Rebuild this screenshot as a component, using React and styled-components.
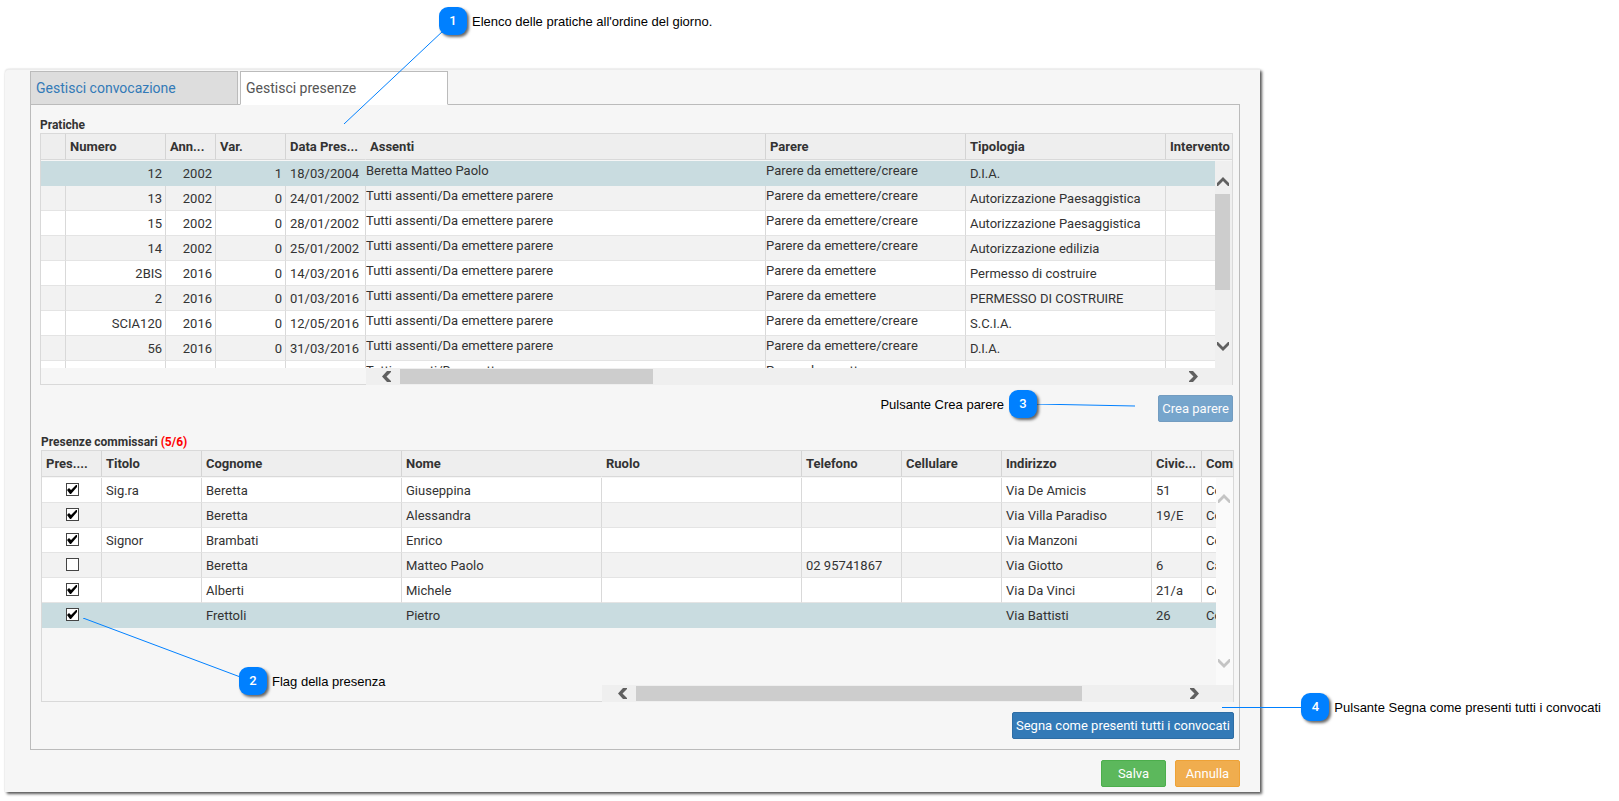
import React, { useState } from "react";
import styled, { createGlobalStyle, css } from "styled-components";

const GlobalStyle = createGlobalStyle`
  *, *::before, *::after { box-sizing: border-box; }
  body {
    margin: 0;
    background: #fff;
    color: #333;
    font-family: Roboto, "Liberation Sans", sans-serif;
    font-size: 13px;
  }
`;

const Page = styled.div`
  position: relative;
  padding: 69px 359px 9px 5px;
`;

const Window = styled.main`
  padding: 1px 20px 5px 25px;
  border-top: 1px solid #ececec;
  border-radius: 4px 0 0 0;
  background: #f6f6f6;
  box-shadow: 2px 2px 3px rgba(0, 0, 0, 0.65), 0 0 2px rgba(0, 0, 0, 0.15);
`;

const TabBar = styled.div`
  display: flex;
  gap: 2px;
  margin-bottom: -1px;
`;

const Tab = styled.button`
  position: relative;
  width: 208px;
  height: 34px;
  padding: 0 5px;
  border: 1px solid #bbb;
  background: #ddd;
  color: #337ab7;
  font: 14px/32px Roboto, sans-serif;
  text-align: left;
  cursor: pointer;

  ${(p) =>
    p.$active &&
    css`
      border-bottom-color: #fff;
      background: #fff;
      color: #555;
    `}
`;

const TabBody = styled.div`
  display: flex;
  flex-direction: column;
  gap: 12px;
  padding: 12px 0 10px;
  border: 1px solid #bbb;
`;

const Section = styled.section`
  display: flex;
  flex-direction: column;
  padding: 0 6px 0 9px;
`;

const MembersSection = styled(Section)`
  padding: 0 5px 0 10px;
`;

const SectionTitle = styled.h2`
  margin: 0;
  font-size: 12px;
  line-height: 16px;
  font-weight: 700;
`;

const Count = styled.span`
  color: #f00;
`;

const GridBox = styled.div`
  display: grid;
  grid-template-columns: minmax(0, 1fr) 17px;
  grid-template-rows: 27px 207px 17px;
  border: 1px solid #d9d9d9;
  border-bottom: 0;
`;

const TableArea = styled.div`
  grid-column: 1 / 3;
  grid-row: 1 / 3;
  overflow: hidden;
`;

const Table = styled.table`
  width: 100%;
  table-layout: fixed;
  border-collapse: separate;
  border-spacing: 0;

  tbody::before {
    content: "";
    display: block;
    height: 1px;
  }
`;

const HeadCell = styled.th`
  height: 26px;
  padding: 0 3px 0 4px;
  border-right: 1px solid ${(p) => (p.$open ? "#eee" : "#d4d4d4")};
  border-bottom: 1px solid #d9d9d9;
  background: #eee;
  line-height: 25px;
  text-align: left;
  white-space: nowrap;
  overflow: hidden;

  &:last-child {
    padding-right: 0;
    border-right: 0;
  }
`;

const Row = styled.tr`
  background: ${(p) => (p.$odd ? "#f2f2f2" : "#fff")};

  ${(p) =>
    p.$selected &&
    css`
      background: #c9dce0;

      && > td {
        border-color: transparent;
      }
    `}
`;

const Cell = styled.td`
  height: 25px;
  padding: 2px 3px 0 4px;
  border-right: 1px solid #d9d9d9;
  border-bottom: 1px solid #e4e4e4;
  line-height: 22px;
  text-align: ${(p) => p.$align || "left"};
  white-space: nowrap;
  overflow: hidden;

  &:last-child {
    padding-right: 0;
    border-right: 0;
  }

  ${(p) =>
    p.$flush &&
    css`
      padding: 0;
      line-height: 20px;
      vertical-align: top;
    `}
`;

const CheckCell = styled(Cell)`
  padding: 5px 3px 0 5px;
  line-height: 13px;
  text-align: center;
  vertical-align: top;
`;

const CheckBox = styled.input`
  appearance: none;
  display: inline-block;
  width: 13px;
  height: 13px;
  margin: 0;
  border: 1px solid #444;
  background: #fff;
  vertical-align: top;

  &:checked::before {
    content: "";
    display: block;
    width: 10px;
    height: 9px;
    margin-top: 1px;
    background: #000;
    clip-path: polygon(0 5px, 2px 3px, 4px 5px, 9px 0, 10px 0, 10px 2px, 4px 9px, 3px 9px);
  }
`;

const VScroll = styled.div`
  grid-column: 2;
  grid-row: 2;
  position: relative;
  display: flex;
  flex-direction: column;
  align-items: center;
  padding: 14px 2px 15px 0;
  background: ${(p) => (p.$idle ? "#fafafa" : "#efefef")};
`;

const HFooter = styled.div`
  grid-column: 1 / 3;
  grid-row: 3;
  display: flex;
`;

const FrozenEdge = styled.div`
  width: ${(p) => p.$width}px;
  border-bottom: 1px solid #d9d9d9;
`;

const HScroll = styled.div`
  flex: 1;
  display: flex;
  align-items: center;
  padding: 0 32px 0 14px;
  background: #efefef;
`;

const Track = styled.div`
  flex: 1;
  align-self: stretch;
  display: flex;
  padding: ${(p) => (p.$vertical ? "6px 0" : "1px 7px")};
`;

const Thumb = styled.div`
  width: ${(p) => (p.$width ? p.$width + "px" : "15px")};
  height: ${(p) => (p.$height ? p.$height + "px" : "15px")};
  background: #cdcdcd;
`;

const VTrack = styled(Track)`
  justify-content: center;
`;

const ArrowButton = styled.button`
  display: flex;
  align-items: center;
  justify-content: center;
  width: 13px;
  height: 13px;
  padding: 0;
  border: 0;
  background: none;
  color: ${(p) => (p.$idle ? "#c4c4c4" : "#606060")};

  svg {
    flex: none;
    fill: currentColor;
  }
`;

const arrows = {
  up: [12, 9, "6,0 12,6 12,9 11,9 6,4 1,9 0,9 0,6"],
  down: [12, 9, "6,9 12,3 12,0 11,0 6,5 1,0 0,0 0,3"],
  left: [9, 11, "0,5.5 5,0 9,0 9,1 4.5,5.5 9,10 9,11 5,11"],
  right: [9, 11, "9,5.5 4,0 0,0 0,1 4.5,5.5 0,10 0,11 4,11"],
};

function ScrollArrow({ to, label, idle }) {
  const [w, h, points] = arrows[to];
  return (
    <ArrowButton type="button" aria-label={label} $idle={idle}>
      <svg width={w} height={h} viewBox={`0 0 ${w} ${h}`}>
        <polygon points={points} />
      </svg>
    </ArrowButton>
  );
}

const Actions = styled.div`
  display: flex;
  justify-content: flex-end;
  gap: 9px;
  margin-top: 10px;
`;

const tones = {
  primary: ["#337ab7", "#2e6da4"],
  success: ["#5cb85c", "#4cae4c"],
  warning: ["#f0ad4e", "#eea236"],
};

const Button = styled.button`
  min-width: ${(p) => (p.$wide ? "65px" : "0")};
  height: 27px;
  padding: 0 3px;
  border: 1px solid ${(p) => tones[p.$tone][1]};
  border-radius: 2px;
  background: ${(p) => tones[p.$tone][0]};
  color: #fff;
  font: 13px/25px Roboto, sans-serif;
  cursor: pointer;

  &:disabled {
    opacity: 0.65;
    cursor: default;
  }
`;

const Callout = styled.div`
  position: absolute;
  top: ${(p) => p.$top}px;
  left: ${(p) => (p.$left === undefined ? "auto" : p.$left + "px")};
  right: ${(p) => (p.$right === undefined ? "auto" : p.$right + "px")};
  display: flex;
  flex-direction: ${(p) => (p.$reverse ? "row-reverse" : "row")};
  align-items: flex-start;
  gap: 5px;
  color: #000;
  font: 13px/30px "Liberation Sans", Arial, sans-serif;
  white-space: nowrap;
`;

const Badge = styled.span`
  width: 28px;
  height: 28px;
  border-radius: 9px;
  background: #0080ff;
  box-shadow: 2px 2px 3px rgba(0, 0, 0, 0.6);
  color: #fff;
  font: 500 13px/28px Roboto, sans-serif;
  text-align: center;
`;

const Leader = styled.svg`
  position: absolute;
  top: ${(p) => p.$top}px;
  left: ${(p) => (p.$left === undefined ? "auto" : p.$left + "px")};
  right: ${(p) => (p.$right === undefined ? "auto" : p.$right + "px")};
  stroke: #0080ff;
  pointer-events: none;
`;

const caseColumns = [
  { width: 25, title: "" },
  { width: 100, title: "Numero", align: "right" },
  { width: 50, title: "Ann...", align: "right" },
  { width: 70, title: "Var.", align: "right" },
  { width: 80, title: "Data Pres...", open: true },
  { width: 400, title: "Assenti", flush: true },
  { width: 200, title: "Parere", flush: true },
  { width: 200, title: "Tipologia" },
  { title: "Intervento" },
];

const ALL = "Tutti assenti/Da emettere parere";
const CREATE = "Parere da emettere/creare";
const ISSUE = "Parere da emettere";

const cases = [
  ["", "12", "2002", "1", "18/03/2004", "Beretta Matteo Paolo", CREATE, "D.I.A.", ""],
  ["", "13", "2002", "0", "24/01/2002", ALL, CREATE, "Autorizzazione Paesaggistica", ""],
  ["", "15", "2002", "0", "28/01/2002", ALL, CREATE, "Autorizzazione Paesaggistica", ""],
  ["", "14", "2002", "0", "25/01/2002", ALL, CREATE, "Autorizzazione edilizia", ""],
  ["", "2BIS", "2016", "0", "14/03/2016", ALL, ISSUE, "Permesso di costruire", ""],
  ["", "2", "2016", "0", "01/03/2016", ALL, ISSUE, "PERMESSO DI COSTRUIRE", ""],
  ["", "SCIA120", "2016", "0", "12/05/2016", ALL, CREATE, "S.C.I.A.", ""],
  ["", "56", "2016", "0", "31/03/2016", ALL, CREATE, "D.I.A.", ""],
  ["", "", "", "", "", ALL, ISSUE, "", ""],
];

const memberColumns = [
  { width: 60, title: "Pres....", check: true },
  { width: 100, title: "Titolo" },
  { width: 200, title: "Cognome" },
  { width: 200, title: "Nome", open: true },
  { width: 200, title: "Ruolo" },
  { width: 100, title: "Telefono" },
  { width: 100, title: "Cellulare" },
  { width: 150, title: "Indirizzo" },
  { width: 50, title: "Civic..." },
  { title: "Com" },
];

const members = [
  [true, "Sig.ra", "Beretta", "Giuseppina", "", "", "", "Via De Amicis", "51", "Co"],
  [true, "", "Beretta", "Alessandra", "", "", "", "Via Villa Paradiso", "19/E", "Co"],
  [true, "Signor", "Brambati", "Enrico", "", "", "", "Via Manzoni", "", "Co"],
  [false, "", "Beretta", "Matteo Paolo", "", "02 95741867", "", "Via Giotto", "6", "Ca"],
  [true, "", "Alberti", "Michele", "", "", "", "Via Da Vinci", "21/a", "Co"],
  [true, "", "Frettoli", "Pietro", "", "", "", "Via Battisti", "26", "Co"],
];

function DataGrid({ label, columns, rows, selected, frozen, hThumb, vThumb }) {
  const idle = !vThumb;
  return (
    <GridBox>
      <TableArea>
        <Table aria-label={label}>
          <colgroup>
            {columns.map((c, i) => (
              <col key={i} width={c.width} />
            ))}
          </colgroup>
          <thead>
            <tr>
              {columns.map((c, i) => (
                <HeadCell key={i} scope="col" $open={c.open}>
                  {c.title}
                </HeadCell>
              ))}
            </tr>
          </thead>
          <tbody>
            {rows.map((row, r) => (
              <Row key={r} $odd={r % 2 === 1} $selected={r === selected}>
                {row.map((value, i) =>
                  columns[i].check ? (
                    <CheckCell key={i}>
                      <CheckBox
                        type="checkbox"
                        defaultChecked={value}
                        aria-label={`Presente: ${row[2]} ${row[3]}`}
                      />
                    </CheckCell>
                  ) : (
                    <Cell key={i} $align={columns[i].align} $flush={columns[i].flush}>
                      {value}
                    </Cell>
                  )
                )}
              </Row>
            ))}
          </tbody>
        </Table>
      </TableArea>
      <VScroll $idle={idle}>
        <ScrollArrow to="up" label="Scorri su" idle={idle} />
        <VTrack $vertical>{vThumb && <Thumb $height={vThumb} />}</VTrack>
        <ScrollArrow to="down" label="Scorri giù" idle={idle} />
      </VScroll>
      <HFooter>
        <FrozenEdge $width={frozen} />
        <HScroll>
          <ScrollArrow to="left" label="Scorri a sinistra" />
          <Track>
            <Thumb $width={hThumb} />
          </Track>
          <ScrollArrow to="right" label="Scorri a destra" />
        </HScroll>
      </HFooter>
    </GridBox>
  );
}

export default function App() {
  const [tab, setTab] = useState("presenze");
  return (
    <Page>
      <GlobalStyle />
      <Window>
        <TabBar role="tablist">
          <Tab
            type="button"
            role="tab"
            aria-selected={tab === "convocazione"}
            $active={tab === "convocazione"}
            onClick={() => setTab("convocazione")}
          >
            Gestisci convocazione
          </Tab>
          <Tab
            type="button"
            role="tab"
            aria-selected={tab === "presenze"}
            $active={tab === "presenze"}
            onClick={() => setTab("presenze")}
          >
            Gestisci presenze
          </Tab>
        </TabBar>
        <TabBody>
          <Section>
            <SectionTitle>Pratiche</SectionTitle>
            <DataGrid
              label="Pratiche"
              columns={caseColumns}
              rows={cases}
              selected={0}
              frozen={325}
              hThumb={253}
              vThumb={96}
            />
            <Actions>
              <Button type="button" $tone="primary" disabled>
                Crea parere
              </Button>
            </Actions>
          </Section>
          <MembersSection>
            <SectionTitle>
              Presenze commissari <Count>(5/6)</Count>
            </SectionTitle>
            <DataGrid
              label="Presenze commissari"
              columns={memberColumns}
              rows={members}
              selected={5}
              frozen={560}
              hThumb={446}
            />
            <Actions>
              <Button type="button" $tone="primary">
                Segna come presenti tutti i convocati
              </Button>
            </Actions>
          </MembersSection>
        </TabBody>
        <Actions>
          <Button type="button" $tone="success" $wide>
            Salva
          </Button>
          <Button type="button" $tone="warning" $wide>
            Annulla
          </Button>
        </Actions>
      </Window>

      <Leader $left={344} $top={30} width="100" height="94">
        <line x1="100" y1="0" x2="0" y2="94" />
      </Leader>
      <Leader $left={83} $top={618} width="160" height="60">
        <line x1="0" y1="0" x2="160" y2="60" />
      </Leader>
      <Leader $right={484} $top={404} width="100" height="3">
        <line x1="0" y1="0" x2="100" y2="2" />
      </Leader>
      <Leader $right={315} $top={707} width="82" height="1">
        <line x1="0" y1="0.5" x2="82" y2="0.5" />
      </Leader>

      <Callout $left={439} $top={7}>
        <Badge>1</Badge>Elenco delle pratiche all'ordine del giorno.
      </Callout>
      <Callout $left={239} $top={667}>
        <Badge>2</Badge>Flag della presenza
      </Callout>
      <Callout $right={582} $top={390} $reverse>
        <Badge>3</Badge>Pulsante Crea parere
      </Callout>
      <Callout $right={18} $top={693}>
        <Badge>4</Badge>Pulsante Segna come presenti tutti i convocati
      </Callout>
    </Page>
  );
}
